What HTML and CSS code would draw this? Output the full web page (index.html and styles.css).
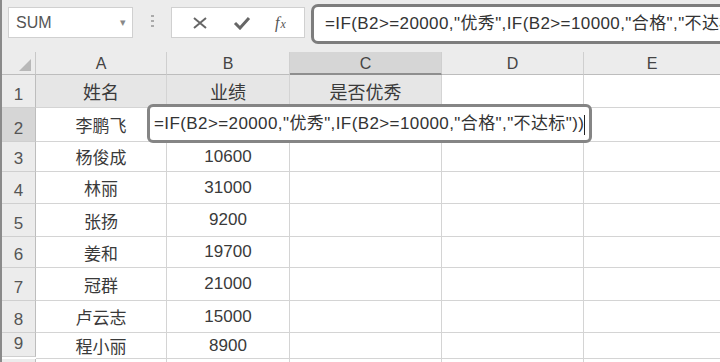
FILE: index.html
```html
<!DOCTYPE html>
<html lang="zh-CN">
<head>
  <meta charset="UTF-8" />
  <title>IF 公式</title>
  <link rel="stylesheet" href="styles.css">
</head>
<body>

  <div class="toolbar">
    <div class="name-box">
      <span>SUM</span>
      <span class="caret">&#9662;</span>
    </div>
    <div class="grip">
      <i></i><i></i><i></i>
    </div>
    <div class="fx-box">
      <svg width="16" height="14" viewBox="0 0 16 14">
        <path d="M2 2 L14 12 M14 2 L2 12" stroke="#666" stroke-width="2" fill="none"/>
      </svg>
      <svg width="18" height="14" viewBox="0 0 18 14">
        <path d="M2 7 L7 12 L16 2" stroke="#666" stroke-width="3" fill="none"/>
      </svg>
      <span class="fx"><i>f</i><i class="x">x</i></span>
    </div>
    <div class="formula-bar">=IF(B2&gt;=20000,"优秀",IF(B2&gt;=10000,"合格","不达标"))</div>
  </div>

  <div class="sheet">
    <div class="grid" id="grid">
      <div class="corner"><span class="tri"></span></div>
      <div class="col-head">A</div>
      <div class="col-head">B</div>
      <div class="col-head active">C</div>
      <div class="col-head">D</div>
      <div class="col-head last">E</div>
    </div>

    <div class="editor">=IF(B2&gt;=20000,"优秀",IF(B2&gt;=10000,"合格","不达标"))<span class="cursor"></span></div>
  </div>

  <script>
    const rows = [
      ["姓名", "业绩", "是否优秀"],
      ["李鹏飞", "", ""],
      ["杨俊成", "10600", ""],
      ["林丽", "31000", ""],
      ["张扬", "9200", ""],
      ["姜和", "19700", ""],
      ["冠群", "21000", ""],
      ["卢云志", "15000", ""],
      ["程小丽", "8900", ""],
      ["", "", ""]
    ];
    const heights = [33, 34, 30, 32, 33, 31, 33, 32, 24, 20];
    const grid = document.getElementById("grid");

    rows.forEach((row, i) => {
      const num = document.createElement("div");
      num.className = "row-head" + (i === 1 ? " active" : "");
      num.style.height = heights[i] + "px";
      // the 10th row is only a sliver at the bottom edge
      num.textContent = i < 9 ? i + 1 : "";
      grid.appendChild(num);

      [...row, "", ""].forEach((val, j) => {
        const cell = document.createElement("div");
        cell.className = "cell" + (i === 0 && j < 3 ? " title" : "") + (j === 4 ? " last" : "");
        cell.textContent = val;
        grid.appendChild(cell);
      });
    });
  </script>

</body>
</html>
```

FILE: styles.css
```css
body {
  margin: 0;
  width: 720px;
  height: 362px;
  overflow: hidden;
  background: #fff;
  font-family: "Liberation Sans", "Noto Sans CJK SC", sans-serif;
  color: #333;
  border-left: 2px solid #8a8a8a;
  box-sizing: border-box;
}

.toolbar {
  height: 52px;
  background: #ececec;
  display: flex;
  align-items: flex-start;
  padding-left: 6px;
  box-sizing: border-box;
  white-space: nowrap;
  overflow: hidden;
}

.toolbar > * {
  flex: none;
}

.name-box {
  margin-top: 7px;
  width: 125px;
  height: 31px;
  box-sizing: border-box;
  background: #fff;
  border: 1px solid #d0d0d0;
  display: flex;
  align-items: center;
  justify-content: space-between;
  padding: 0 6px 0 7px;
  font-size: 16px;
  color: #555;
}

.caret {
  font-size: 11px;
  color: #888;
}

.grip {
  width: 38px;
  margin-top: 15px;
  display: flex;
  flex-direction: column;
  align-items: center;
  gap: 3px;
}

.grip i {
  width: 3px;
  height: 2px;
  background: #aaa;
}

.fx-box {
  margin-top: 7px;
  width: 134px;
  height: 31px;
  box-sizing: border-box;
  background: #fff;
  border: 1px solid #d0d0d0;
  display: flex;
  align-items: center;
  justify-content: space-around;
  padding: 0 6px 0 8px;
}

.fx {
  font-family: "Liberation Serif", serif;
  font-size: 16px;
  color: #555;
}

.fx .x {
  font-size: 12px;
  margin-left: 1px;
}

.formula-bar {
  margin: 4px 0 0 6px;
  width: 460px;
  height: 40px;
  box-sizing: border-box;
  border: 3px solid #7d7d7d;
  border-right: none;
  border-radius: 7px 0 0 7px;
  background: #fff;
  padding-left: 11px;
  line-height: 34px;
  font-size: 17px;
  letter-spacing: 0.4px;
  color: #333;
  overflow: hidden;
}

.sheet {
  position: relative;
}

.grid {
  display: grid;
  grid-template-columns: 34px 131px 123px 152px 142px 136px;
  grid-auto-rows: auto;
}

.corner,
.col-head {
  height: 23px;
  background: #ececec;
  border-bottom: 1px solid #bdbdbd;
  box-sizing: border-box;
}

.corner {
  position: relative;
  border-right: 1px solid #c8c8c8;
}

.tri {
  position: absolute;
  right: 4px;
  bottom: 3px;
  width: 0;
  height: 0;
  border-left: 12px solid transparent;
  border-bottom: 12px solid #b8b8b8;
}

.col-head {
  border-right: 1px solid #cfcfcf;
  text-align: center;
  line-height: 24px;
  font-size: 16px;
  color: #444;
}

.col-head.active {
  background: #d6d6d6;
  border-bottom: 2px solid #8e8e8e;
}

.col-head.last,
.cell.last {
  border-right: none;
}

.row-head {
  background: #ececec;
  border-right: 1px solid #bdbdbd;
  border-bottom: 1px solid #cfcfcf;
  box-sizing: border-box;
  display: flex;
  align-items: flex-end;
  justify-content: center;
  padding-bottom: 2px;
  font-size: 17px;
  color: #555;
}

.row-head.active {
  background: #d6d6d6;
}

.cell {
  border-right: 1px solid #d4d4d4;
  border-bottom: 1px solid #d4d4d4;
  box-sizing: border-box;
  display: flex;
  align-items: center;
  justify-content: center;
  font-size: 17px;
  color: #3a3a3a;
}

.cell.title {
  background: #e6e6e6;
  font-size: 18px;
}

.editor {
  position: absolute;
  left: 145px;
  top: 52px;
  width: 445px;
  height: 39px;
  box-sizing: border-box;
  border: 3px solid #858585;
  border-radius: 6px;
  background: #fff;
  padding-left: 4px;
  line-height: 33px;
  font-size: 17px;
  letter-spacing: 0.4px;
  color: #333;
  white-space: nowrap;
}

.cursor {
  display: inline-block;
  width: 1px;
  height: 20px;
  background: #222;
  vertical-align: middle;
}
```
